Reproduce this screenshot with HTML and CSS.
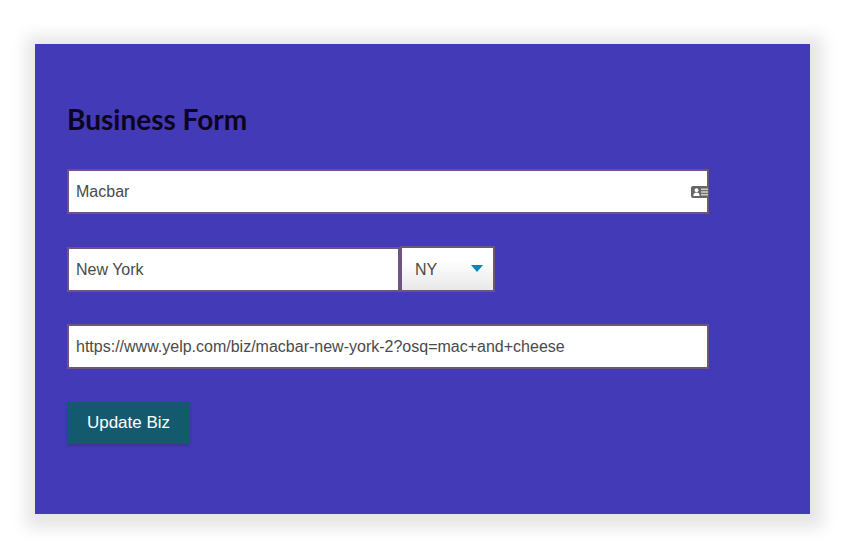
FILE: index.html
```html
<!DOCTYPE html>
<html lang="en">
<head>
    <meta charset="UTF-8">
    <meta name="viewport" content="width=device-width, initial-scale=1.0">
    <title>Business Form</title>
    <link rel="stylesheet" href="styles.css">
</head>
<body>

<div class="card">
    <h1>Business Form</h1>
    <form class="biz-form">
        <div class="field">
            <input type="text" class="text-input" value="Macbar">
            <svg class="card-icon" width="17" height="12" viewBox="0 0 17 12">
                <rect width="17" height="12" rx="2" fill="#666"/>
                <circle cx="5.5" cy="4.2" r="1.9" fill="#fff"/>
                <path d="M2.4 10c0-2.4 1.2-3.4 3.1-3.4s3.1 1 3.1 3.4z" fill="#fff"/>
                <rect x="10" y="2.5" width="7" height="1.6" fill="#ccc"/>
                <rect x="10" y="5.2" width="7" height="1.6" fill="#ccc"/>
                <rect x="10" y="7.9" width="7" height="1.6" fill="#ccc"/>
            </svg>
        </div>
        <div class="field city-row">
            <input type="text" class="text-input city" value="New York">
            <div class="state">
                <select class="state-select">
                    <option>NY</option>
                </select>
                <span class="arrow"></span>
            </div>
        </div>
        <div class="field">
            <input type="text" class="text-input" value="https://www.yelp.com/biz/macbar-new-york-2?osq=mac+and+cheese">
        </div>
        <button type="button" class="submit">Update Biz</button>
    </form>
</div>

</body>
</html>
```

FILE: styles.css
```css
body {
    margin: 0;
    min-height: 550px;
    padding: 44px 0 0 35px;
    box-sizing: border-box;
    background: #fff;
    font-family: "Liberation Sans", Arial, sans-serif;
}
.card {
    width: 775px;
    height: 470px;
    padding: 32px;
    box-sizing: border-box;
    background: #433ab8;
    box-shadow: 2px 3px 15px 11px rgba(0, 0, 0, 0.1);
}
h1 {
    margin: 27px 0 34px;
    font-family: Lato, sans-serif;
    font-size: 28px;
    line-height: 32px;
    font-weight: 700;
    color: #0d0520;
}
.biz-form {
    width: 642px;
}
.field {
    position: relative;
    height: 45px;
    margin-bottom: 33px;
}
.text-input {
    display: block;
    width: 100%;
    height: 45px;
    padding: 0 7px;
    box-sizing: border-box;
    border: 2px solid #6f5380;
    background: #fff;
    font-family: "Liberation Sans", Arial, sans-serif;
    font-size: 16px;
    color: #4a4a4a;
    outline: none;
}
.card-icon {
    position: absolute;
    top: 17px;
    right: 1px;
}
.city-row {
    display: flex;
    margin-bottom: 32px;
}
.text-input.city {
    width: 333px;
}
.state {
    position: relative;
    width: 95px;
    margin-top: -1px;
}
.state-select {
    display: block;
    width: 100%;
    height: 46px;
    padding: 0 13px;
    box-sizing: border-box;
    border: 2px solid #6f5380;
    border-radius: 0;
    background: linear-gradient(#fff 30%, #e8e8e8);
    font-family: "Liberation Sans", Arial, sans-serif;
    font-size: 16px;
    color: #4a4a4a;
    appearance: none;
    outline: none;
}
.arrow {
    position: absolute;
    top: 19px;
    right: 12px;
    width: 0;
    height: 0;
    border-left: 6px solid transparent;
    border-right: 6px solid transparent;
    border-top: 7px solid #0a85b5;
}
.submit {
    display: block;
    width: 123px;
    height: 42px;
    border: none;
    background: #135a6e;
    font-family: "Liberation Sans", Arial, sans-serif;
    font-size: 17px;
    color: #fff;
    box-shadow: 0 2px 3px rgba(0, 0, 0, 0.15);
}
```
